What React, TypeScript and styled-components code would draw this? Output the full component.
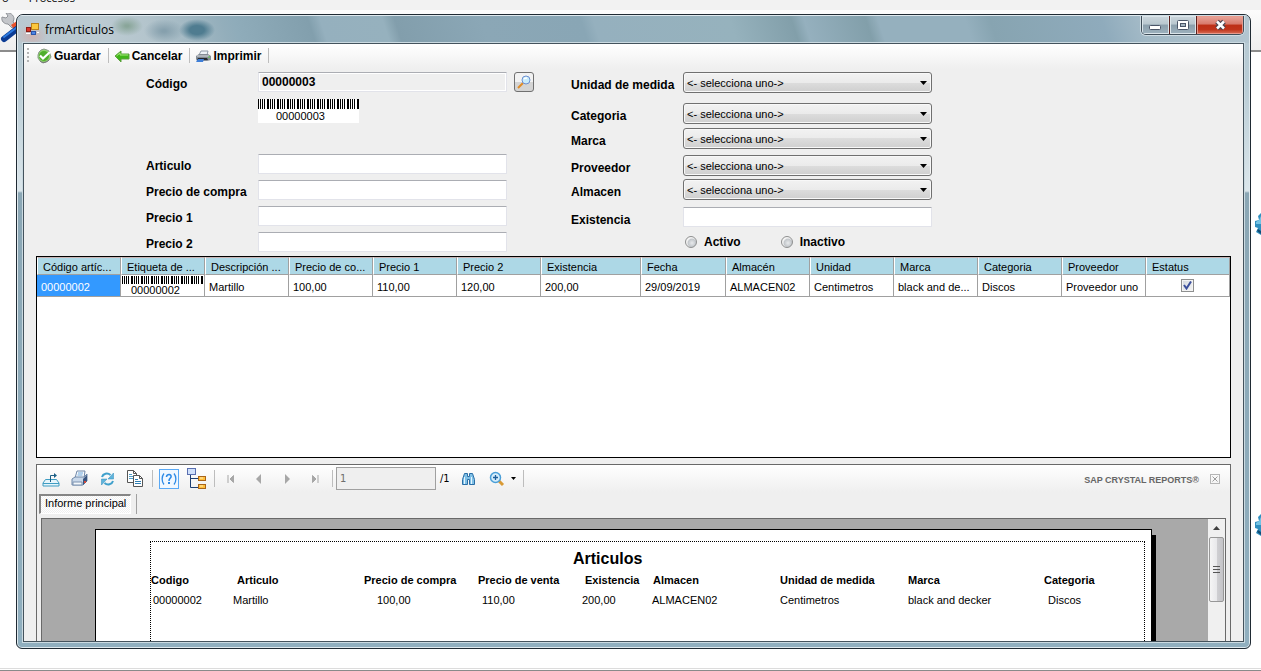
import React from "react";
import styled, { createGlobalStyle } from "styled-components";

const Global = createGlobalStyle`
  *, *::before, *::after { box-sizing: border-box; }
  body { margin: 0; background: #fff; }
  button, input, select { font: inherit; color: inherit; margin: 0; padding: 0; border: 0; background: none; }
`;

const UI = `"Liberation Sans", Arial, sans-serif`;
const TAHOMA = `"DejaVu Sans Condensed", "DejaVu Sans", sans-serif`;
const SEGOE = `"Open Sans", "Noto Sans", sans-serif`;

/* ---------- desktop behind the window ---------- */

const Desktop = styled.div`
  position: relative;
  height: 100vh;
  min-height: 480px;
  display: flex;
  flex-direction: column;
  overflow: hidden;
  background: #fff;
  font-family: ${UI};
  font-size: 11px;
  color: #000;
`;

const ParentForm = styled.div`
  position: absolute;
  inset: 0;
  display: flex;
  flex-direction: column;
`;

const ParentMenu = styled.div`
  height: 10px;
  flex: none;
  display: flex;
  gap: 20px;
  align-items: flex-end;
  padding: 0 0 5px 2px;
  overflow: hidden;
  background: #f2f2f2;
  font-family: ${SEGOE};
  font-size: 11px;
  line-height: 14px;
`;

const ParentTools = styled.div`
  flex: none;
  height: 42px;
  padding-top: 3px;
  background: linear-gradient(#fcfcfc, #eeeeee);
  border-bottom: 2px solid #8c8c8c;
`;

const ParentBody = styled.div`
  flex: 1;
  display: flex;
  flex-direction: column;
  align-items: flex-end;
  padding-top: 161px;
  gap: 279px;
`;

const ParentStatus = styled.div`
  flex: none;
  height: 3px;
  border-top: 1px solid #dcdcdc;
  border-bottom: 1px solid #8a8a8a;
`;

/* ---------- window frame ---------- */

const WindowFrame = styled.section`
  position: relative;
  flex: 1;
  min-height: 0;
  display: flex;
  flex-direction: column;
  margin: 14px 10px 22px 16px;
  padding: 0 6px 6px;
  border: 1px solid #1f2a33;
  border-radius: 7px 7px 6px 6px;
  overflow: hidden;
  background: linear-gradient(#b5c8d1 0, #b9ccd5 70px, #dbe6eb 176px, #8ba7b5 178px, #90afbf 100%);
  box-shadow: inset 0 0 0 1px #dfe9ee;
`;

const TitleBar = styled.header`
  flex: none;
  height: 28px;
  display: flex;
  align-items: flex-start;
  justify-content: space-between;
  margin: 0 -5px;
  padding: 0 5px 0 3px;
  border-top: 1px solid #dfe9ee;
  background:
    radial-gradient(ellipse 18px 11px at 179px 14px, #4f7c90 40%, transparent 100%),
    radial-gradient(ellipse 16px 10px at 109px 10px, #8aa69a 10%, transparent 100%),
    radial-gradient(ellipse 20px 12px at 146px 15px, #86a0ad 10%, transparent 100%),
    radial-gradient(ellipse 16px 12px at 14px 20px, #cdb3b3 0, transparent 100%),
    linear-gradient(72deg, #b9c8d0 0, #bccbd2 7%, #b3c4cc 11%, #93aebb 17%, #8facba 18%, #829fad 24%, #95b0be 25%,
      #96b1be 30%, #829eac 31%, #8ba7b6 38%, #89a6b5 46%, #95b0be 47%, #96b2bd 58%, #829faa 63%, #95b0be 64%,
      #829faa 69%, #95b0be 70%, #95b0be 77%, #87a4b1 79%, #8fabbc 88%, #a2b9c6 91%, #b3c6d0 100%);
`;

const Caption = styled.h1`
  display: flex;
  align-items: center;
  gap: 6px;
  height: 26px;
  margin: 0;
  padding-left: 5px;
  font-family: ${SEGOE};
  font-size: 12px;
  font-weight: 400;
`;

const CaptionButtons = styled.div`
  display: flex;
  border: 1px solid #3f4d58;
  border-top: 0;
  border-radius: 0 0 5px 5px;
  overflow: hidden;
  box-shadow: 0 0 0 1px #cfdce3;
`;

const CaptionButton = styled.button<{ $close?: boolean }>`
  width: ${(p) => (p.$close ? 47 : 27)}px;
  height: 18px;
  display: flex;
  align-items: center;
  justify-content: center;
  border-left: ${(p) => (p.$close ? "1px solid #5c1f1c" : "0")};
  box-shadow: inset 0 0 0 1px ${(p) => (p.$close ? "#e79a8c" : "#dbe5ea")};
  background: ${(p) =>
    p.$close
      ? "linear-gradient(#e9a79c 0, #d8796a 45%, #bd2f16 50%, #c0341a 75%, #d9705a 100%)"
      : "linear-gradient(#ccd7dd 0, #b9c7cf 45%, #8b9fac 50%, #9db1bd 100%)"};
  & + & { border-left: 1px solid ${(p) => (p.$close ? "#5c1f1c" : "#5d6c78")}; }
`;

const Client = styled.main`
  flex: 1;
  min-height: 0;
  display: flex;
  flex-direction: column;
  border: 1px solid #44535d;
  outline: 1px solid #cbdae1;
  background: #efefef;
  overflow: hidden;
`;

/* ---------- command bar ---------- */

const CommandBar = styled.div`
  flex: none;
  height: 25px;
  display: flex;
  align-items: center;
  padding: 0 0 2px 3px;
  background: linear-gradient(#ffffff, #efefef);
`;

const Grip = styled.span`
  width: 2px;
  height: 15px;
  margin-right: 7px;
  background: repeating-linear-gradient(#b4b4b4 0 2px, transparent 2px 4px);
`;

const CommandButton = styled.button`
  display: flex;
  align-items: center;
  gap: 2px;
  font-size: 12px;
  font-weight: 700;
  line-height: 16px;
`;

const BarSeparator = styled.span`
  width: 1px;
  height: 15px;
  margin: 0 5px 0 7px;
  background: #bdbdbd;
`;

/* ---------- form ---------- */

const Form = styled.form`
  flex: none;
  display: flex;
  align-items: flex-start;
  height: 187px;
  padding: 3px 0 0 122px;
`;

const LeftFields = styled.div`
  display: grid;
  grid-template-columns: 112px 249px 27px;
  grid-template-rows: 27px 55px 26px 26px 26px 21px;
  align-items: start;
  margin-right: 37px;
  line-height: 24px;
`;

const RightFields = styled.div`
  display: grid;
  grid-template-columns: 112px 249px;
  grid-template-rows: 31px 25px 27px 24px 28px 27px;
  align-items: start;
  line-height: 26px;
`;

const FieldLabel = styled.label`
  grid-column: 1;
  font-size: 12px;
  font-weight: 700;
  white-space: nowrap;
`;

const TextInput = styled.input<{ $bold?: boolean }>`
  width: 100%;
  height: 20px;
  padding: 0 3px;
  border: 1px solid #e2e3ea;
  border-top-color: #abadb3;
  border-radius: 1px;
  background: ${(p) => (p.readOnly ? "#efefef" : "#fff")};
  box-shadow: ${(p) => (p.readOnly ? "inset 0 0 0 1px #fff" : "none")};
  font-size: ${(p) => (p.$bold ? 12 : 11)}px;
  font-weight: ${(p) => (p.$bold ? 700 : 400)};
`;

const BarcodeBox = styled.div`
  grid-column: 2;
  width: 101px;
  display: flex;
  flex-direction: column;
  background: #fff;
  line-height: 14px;
`;

const BarcodeText = styled.span<{ $indent: number }>`
  padding-left: ${(p) => p.$indent}px;
`;

const LookupButton = styled.button`
  justify-self: end;
  width: 20px;
  height: 20px;
  display: flex;
  align-items: center;
  justify-content: center;
  border: 1px solid #707070;
  border-radius: 3px;
  background: linear-gradient(#f2f2f2 50%, #d4d4d4 50%);
`;

const SelectBox = styled.span`
  position: relative;
  display: block;
  svg {
    position: absolute;
    right: 5px;
    top: 9px;
    pointer-events: none;
  }
`;

const Select = styled.select`
  appearance: none;
  display: block;
  width: 100%;
  height: 21px;
  padding: 0 3px;
  border: 1px solid #707070;
  border-radius: 3px;
  box-shadow: inset 0 0 0 1px #f8f8f8;
  background: linear-gradient(#f2f2f2 0, #ebebeb 50%, #dddddd 50%, #cfcfcf 100%);
  font-size: 11px;
  line-height: normal;
`;

const RadioRow = styled.div`
  grid-column: 2;
  display: flex;
  gap: 40px;
  padding: 1px 0 0 2px;
`;

const RadioLabel = styled.label`
  display: flex;
  align-items: center;
  gap: 7px;
  font-size: 12px;
  font-weight: 700;
  line-height: 14px;
`;

const Radio = styled.input`
  appearance: none;
  width: 12px;
  height: 12px;
  border: 1px solid #8e8f8f;
  border-radius: 50%;
  background: radial-gradient(circle at 60% 60%, #e8eaec 0, #c3c7cb 45%, #f4f4f4 60%);
`;

/* ---------- data grid ---------- */

const DataGrid = styled.div`
  flex: none;
  height: 202px;
  margin: 0 12px 6px;
  border: 1px solid #000;
  background: #fff;
  overflow: hidden;
`;

const GridTable = styled.table`
  width: 100%;
  table-layout: fixed;
  border-collapse: separate;
  border-spacing: 0;
  line-height: 13px;
  white-space: nowrap;
`;

const GridHead = styled.th`
  height: 18px;
  padding: 2px 0 0 5px;
  overflow: hidden;
  text-align: left;
  font-weight: 400;
  border-top: 1px solid #c9b5b5;
  border-left: 1px solid #fff;
  border-right: 1px solid #a0a0a0;
  border-bottom: 1px solid #a0a0a0;
  background: #add8e6;
`;

const GridCell = styled.td<{ $selected?: boolean; $flush?: boolean; $center?: boolean }>`
  height: 22px;
  padding: ${(p) => (p.$flush ? "0 1px" : p.$center ? "0" : "3px 0 0 4px")};
  overflow: hidden;
  vertical-align: ${(p) => (p.$flush ? "top" : "middle")};
  text-align: ${(p) => (p.$center ? "center" : "left")};
  border-right: 1px solid #a0a0a0;
  border-bottom: 1px solid #a0a0a0;
  background: ${(p) => (p.$selected ? "#3399ff" : "#fff")};
  color: ${(p) => (p.$selected ? "#fff" : "#000")};
`;

const CellBarcode = styled.div`
  display: flex;
  flex-direction: column;
  height: 21px;
  padding-top: 1px;
  line-height: 12px;
  svg { flex: none; }
`;

const CheckWrap = styled.label`
  position: relative;
  display: inline-block;
  width: 13px;
  height: 13px;
  vertical-align: top;
  svg { position: absolute; left: 2px; top: 2px; }
`;

const CheckBox = styled.input`
  appearance: none;
  display: block;
  width: 13px;
  height: 13px;
  border: 1px solid #8e8f8f;
  background: linear-gradient(135deg, #d3d8de, #f5f5f5);
  box-shadow: inset 0 0 0 1px #f4f4f4;
`;

/* ---------- report viewer ---------- */

const Viewer = styled.section`
  flex: 1;
  min-height: 0;
  display: flex;
  flex-direction: column;
  margin: 0 12px;
  border: 1px solid #696969;
  border-bottom: 0;
`;

const ViewerBar = styled.div`
  flex: none;
  height: 27px;
  display: flex;
  align-items: center;
  background: linear-gradient(#ffffff, #efefef);
`;

const ToolButton = styled.button`
  width: 28px;
  height: 24px;
  display: flex;
  align-items: center;
  justify-content: center;
`;

const CaretButton = styled(ToolButton)`
  width: 5px;
`;

const ToolSeparator = styled.span<{ $wide?: boolean }>`
  width: 1px;
  height: 17px;
  margin: 0 2px 0 ${(p) => (p.$wide ? 7 : 3)}px;
  background: #bdbdbd;
`;

const PageInput = styled.input`
  width: 100px;
  height: 23px;
  margin-left: 1px;
  padding: 0 3px;
  border: 1px solid #a0a0a0;
  background: #efefef;
  color: #6d6d6d;
  font-family: ${TAHOMA};
  font-size: 11px;
`;

const PageTotal = styled.span`
  margin: 0 5px 0 4px;
  font-family: ${TAHOMA};
  font-size: 11px;
`;

const Brand = styled.span`
  margin: 3px 11px 0 auto;
  color: #666;
  font-size: 9px;
  font-weight: 700;
`;

const ClosePanel = styled.button`
  width: 10px;
  height: 10px;
  margin-right: 10px;
  display: flex;
  border: 1px solid #b5b5b5;
`;

const TabRow = styled.div`
  flex: none;
  height: 26px;
  display: flex;
  align-items: flex-start;
  padding: 2px 0 0 2px;
`;

const Tab = styled.button`
  height: 20px;
  padding: 0 4px 2px;
  border: 1px solid #fff;
  border-top: 2px solid #858585;
  border-left: 2px solid #858585;
  background: repeating-conic-gradient(#f0f0f0 0 25%, #ffffff 0 50%) 0 0 / 2px 2px;
  font-size: 11px;
  line-height: 15px;
  white-space: nowrap;
`;

const TabSeparator = styled.span`
  width: 1px;
  height: 20px;
  margin-left: 5px;
  background: #a0a0a0;
`;

const ReportPane = styled.div`
  flex: 1;
  min-height: 0;
  display: flex;
  margin: 0 4px;
  border: 1px solid #696969;
  border-bottom: 0;
  background: #a9a9a9;
  overflow: hidden;
`;

const Page = styled.article`
  flex: 1;
  min-width: 0;
  margin: 10px 56px 0 53px;
  padding: 11px 6px 0 54px;
  border: 1px solid #000;
  border-bottom: 0;
  background: #fff;
  box-shadow: 4px 6px 0 0 #000;
`;

const PageMargins = styled.div`
  height: 100%;
  border: 1px dotted #000;
  border-bottom: 0;
`;

const ReportTitle = styled.h2`
  margin: 7px 0 3px;
  padding-left: 422px;
  font-size: 16px;
  line-height: 20px;
`;

const ReportTable = styled.table`
  width: 100%;
  table-layout: fixed;
  border-collapse: collapse;
  line-height: 14px;
  white-space: nowrap;
`;

const ReportHead = styled.th<{ $indent: number }>`
  height: 16px;
  padding: 0 0 0 ${(p) => p.$indent}px;
  text-align: left;
  font-weight: 700;
`;

const ReportCell = styled.td<{ $indent: number }>`
  height: 24px;
  padding: 0 0 0 ${(p) => p.$indent}px;
`;

const ScrollTrack = styled.div`
  flex: none;
  width: 17px;
  display: flex;
  flex-direction: column;
  align-items: center;
  padding: 0 1px;
  background: #f0f0f0;
`;

const ScrollArrow = styled.button`
  width: 15px;
  height: 18px;
  display: flex;
  align-items: center;
  justify-content: center;
`;

const ScrollThumb = styled.div`
  width: 15px;
  height: 65px;
  display: flex;
  align-items: center;
  justify-content: center;
  border: 1px solid #979797;
  border-radius: 2px;
  background: linear-gradient(to right, #f5f5f5 0, #e9e9eb 50%, #cfcfd2 55%, #c4c4c8 100%);
`;

/* ---------- icons ---------- */

const Svg = ({ w, h, children }: { w: number; h: number; children: React.ReactNode }) => (
  <svg width={w} height={h} viewBox={`0 0 ${w} ${h}`} fill="none" aria-hidden="true">
    {children}
  </svg>
);

const Wrench = () => (
  <Svg w={17} h={32}>
    <path d="M2 4l4 1 2-2-2-3c4-1 8 2 8 6l-1 3 3 3-4 3-4-4C4 11 1 8 2 4z" fill="#c4c6ca" stroke="#8f9297" />
    <path d="M11 12l6-4v9l-3-1z" fill="#e8502a" />
    <path d="M17 16L4 26" stroke="#0c3c94" strokeWidth="6" strokeLinecap="round" />
    <path d="M16 15L4 24" stroke="#2c7be0" strokeWidth="2" strokeLinecap="round" />
  </Svg>
);

const GearEdge = () => (
  <Svg w={7} h={22}>
    <path d="M7 0L4 3l1 4-4 1v6l3 1-2 4 5 3z" fill="#2f8fc0" />
    <path d="M7 3L5 7 2 9v2h5z" fill="#74c3e4" />
    <path d="M3 18l4 3v-3l-3-2z" fill="#0e4e78" />
  </Svg>
);

const FormIcon = () => (
  <Svg w={13} h={13}>
    <rect x="0.500" y="4.500" width="4" height="4" fill="#d8352a" stroke="#8d1c14" />
    <rect x="5.500" y="0.500" width="7" height="6" fill="#fbc83d" stroke="#b9821a" />
    <rect x="5.500" y="8.500" width="4" height="3" fill="#4f86e8" stroke="#2b55a8" />
    <path d="M0 10.500h4M11 9.500h2" stroke="#fff" />
  </Svg>
);

const MinimizeGlyph = () => (
  <Svg w={13} h={12}>
    <rect x="0.500" y="6.500" width="11" height="4" rx="1" fill="#fff" stroke="#4b5568" />
  </Svg>
);

const MaximizeGlyph = () => (
  <Svg w={13} h={12}>
    <rect x="0.500" y="1.500" width="11" height="9" rx="1" fill="#fff" stroke="#4b5568" />
    <rect x="3.500" y="4.500" width="5" height="3" fill="#a5b5c1" stroke="#4b5568" />
  </Svg>
);

const CloseGlyph = () => (
  <Svg w={13} h={12}>
    <path d="M3 2.500l7 7M10 2.500l-7 7" stroke="#4b4550" strokeWidth="5" />
    <path d="M3 2.500l7 7M10 2.500l-7 7" stroke="#fff" strokeWidth="2.500" />
  </Svg>
);

const SaveIcon = () => (
  <Svg w={16} h={16}>
    <path d="M8 1l3 1 2 1 1 3 1 3-2 3-3 2-3 1-3-2-2-3 0-3 1-3 2-2z" fill="#8fd46c" stroke="#8b9a8b" />
    <circle cx="8" cy="8" r="5" fill="#4fae2b" />
    <path d="M4 7.500l3 3L14 4" stroke="#fff" strokeWidth="2.200" />
    <path d="M4 13c2 2 6 2 9-1" stroke="#777" />
  </Svg>
);

const BackArrow = () => (
  <Svg w={16} h={16}>
    <path d="M1 8l6-5v3h8v5H7v3z" fill="#3fb618" stroke="#5c9f3e" />
    <path d="M2.500 8L6 5v2h8" stroke="#a7ea7c" />
  </Svg>
);

const PrinterSmall = () => (
  <Svg w={16} h={16}>
    <path d="M6 3h7l-1 4H4z" fill="#eef3f8" stroke="#8e9aa8" />
    <path d="M1 8l3-2h9l3 2v4l-4 1H2l-1-2z" fill="#858c95" />
    <path d="M2 8h12" stroke="#d9dee2" />
    <path d="M3 10h9l1 2H2z" fill="#26292d" />
    <path d="M3 11h6l-1 3H1z" fill="#3f7fd8" />
    <path d="M13 9h2" stroke="#5fd04c" />
  </Svg>
);

const Lens = () => (
  <Svg w={14} h={14}>
    <path d="M6 8L1 13" stroke="#e08c28" strokeWidth="2" />
    <circle cx="9" cy="5" r="4" fill="#c9ecfb" stroke="#6d8fd0" />
    <path d="M7 4c1-1 2-1 3-1" stroke="#fff" strokeWidth="1.500" />
  </Svg>
);

const DownArrow = () => (
  <Svg w={7} h={4}>
    <path d="M0 0h7L3.500 4z" fill="#000" />
  </Svg>
);

const Tick = () => (
  <Svg w={9} h={9}>
    <path d="M1 4l2.500 3.500L8 0.500" stroke="#3b4f9c" strokeWidth="2" />
  </Svg>
);

const ExportIcon = () => (
  <Svg w={18} h={16}>
    <path d="M3.500 8.500L1 12v3h16v-3l-2.500-3.500z" fill="#e6f5fb" stroke="#3f9cc2" />
    <path d="M1 12.500h16" stroke="#3f9cc2" />
    <path d="M8.500 11V4.500h4" stroke="#1d5f86" />
    <path d="M12 2l3 2.500L12 7z" fill="#1d5f86" />
  </Svg>
);

const PrinterIcon = () => (
  <Svg w={17} h={17}>
    <path d="M6 1h8l-1 7H4z" fill="#f5f9fd" stroke="#6f87a8" />
    <path d="M7 3h5M6.500 5h5" stroke="#6fa8dc" />
    <path d="M1 9l3-2h9l3-3v7l-4 4H1z" fill="#c9d8ea" stroke="#6f88a9" />
    <path d="M12 9l4-4v6l-4 4z" fill="#39557f" />
    <path d="M2 12h9v3H2z" fill="#f4f8fc" stroke="#7d93b0" />
    <path d="M13 12h2" stroke="#d24a3a" strokeWidth="2" />
  </Svg>
);

const RefreshIcon = () => (
  <Svg w={15} h={14}>
    <path d="M2 5c1-3.500 5.500-4.500 8.500-2" stroke="#3fa0cc" strokeWidth="2" />
    <path d="M13.500 1v6H8z" fill="#5fb4dc" stroke="#2f8dbc" strokeWidth="0.500" />
    <path d="M13 9c-1 3.500-5.500 4.500-8.500 2" stroke="#3fa0cc" strokeWidth="2" />
    <path d="M1.500 13V7H7z" fill="#5fb4dc" stroke="#2f8dbc" strokeWidth="0.500" />
  </Svg>
);

const CopyIcon = () => (
  <Svg w={17} h={18}>
    <path d="M0.500 0.500h6l3 3v9h-9z" fill="#fff" stroke="#555" />
    <path d="M6.500 0.500v3h3" stroke="#555" />
    <path d="M2 4.500h3M2 6.500h5M2 8.500h5" stroke="#4f9fcb" />
    <path d="M6.500 5.500h6l3 3v8h-9z" fill="#fff" stroke="#555" />
    <path d="M12.500 5.500v3h3" stroke="#555" />
    <path d="M8 9.500h3M8 11.500h6M8 13.500h6" stroke="#2f7fb4" />
  </Svg>
);

const HelpIcon = () => (
  <Svg w={20} h={20}>
    <rect x="0.500" y="0.500" width="19" height="19" fill="#f1f8ff" stroke="#5aa9f5" />
    <path d="M5 4.500c-2.500 3-2.500 8 0 11M15 4.500c2.500 3 2.500 8 0 11" stroke="#2d8ae6" strokeWidth="1.300" />
    <path d="M7.500 8c0-3.500 5.500-3 4.500 0-0.500 1.500-2 1.500-2 4" stroke="#2d8ae6" strokeWidth="1.600" />
    <rect x="9" y="13" width="2" height="2" fill="#2d8ae6" />
  </Svg>
);

const TreeIcon = () => (
  <Svg w={20} h={22}>
    <path d="M3.500 7v12.500H12M3.500 10.500H12" stroke="#1c3e72" />
    <rect x="0.500" y="0.500" width="8" height="6" fill="#cfe0fb" stroke="#5a6fb0" />
    <rect x="11.500" y="8.500" width="7" height="4" fill="#ffbf3c" stroke="#a8641a" />
    <rect x="11.500" y="16.500" width="7" height="4" fill="#ffbf3c" stroke="#a8641a" />
    <path d="M13 10h3M13 18h3" stroke="#fff0b8" />
  </Svg>
);

const NavIcon = ({ kind }: { kind: "first" | "prev" | "next" | "last" }) => (
  <Svg w={8} h={10}>
    {kind === "first" && <path d="M1 1v8M6.500 1.500v7L3 5z" stroke="#a7a7a7" fill="#a7a7a7" />}
    {kind === "prev" && <path d="M6 0v10L1 5z" fill="#a7a7a7" />}
    {kind === "next" && <path d="M2 0v10l5-5z" fill="#a7a7a7" />}
    {kind === "last" && <path d="M7 1v8M1.500 1.500v7L5 5z" stroke="#a7a7a7" fill="#a7a7a7" />}
  </Svg>
);

const Binoculars = () => (
  <Svg w={15} h={14}>
    <path d="M3.500 1.500h3v3h2v-3h3l2 6v5h-5v-5h-2v5h-5v-5z" fill="#7fc0e6" stroke="#2a6ea6" />
    <path d="M3.500 5v7M10.500 5v7" stroke="#e6f5ff" />
  </Svg>
);

const ZoomIcon = () => (
  <Svg w={16} h={16}>
    <path d="M10 10l4 4" stroke="#d99a35" strokeWidth="3" />
    <circle cx="6.500" cy="6.500" r="5" fill="#d5edfb" stroke="#4a9fd8" strokeWidth="1.500" />
    <path d="M4 6.500h5M6.500 4v5" stroke="#1d5f9c" strokeWidth="1.300" />
  </Svg>
);

const MenuCaret = () => (
  <Svg w={5} h={3}>
    <path d="M0 0h5L2.500 3z" fill="#000" />
  </Svg>
);

const SmallCross = () => (
  <Svg w={8} h={8}>
    <path d="M1.500 1.500l5 5M6.500 1.500l-5 5" stroke="#9b9b9b" />
  </Svg>
);

const ArrowUp = () => (
  <Svg w={7} h={4}>
    <path d="M0 4h7L3.500 0z" fill="#404040" />
  </Svg>
);

const ThumbGrip = () => (
  <Svg w={7} h={8}>
    <path d="M0 0.500h7M0 3.500h7M0 6.500h7" stroke="#555" />
  </Svg>
);

const BARS = [[0, 2], [3, 1], [5, 1], [7, 1]];

const Barcode = ({ height }: { height: number }) => (
  <svg width="100%" height={height} shapeRendering="crispEdges" aria-hidden="true">
    {Array.from({ length: 11 }, (_, i) =>
      BARS.map(([x, w]) => <rect key={`${i}-${x}`} x={i * 10 + x - 1} y="0" width={w} height={height} fill="#000" />),
    )}
  </svg>
);

/* ---------- data ---------- */

const columns = [
  { title: "Código artíc...", width: 84 },
  { title: "Etiqueta de ...", width: 84 },
  { title: "Descripción ...", width: 84, value: "Martillo" },
  { title: "Precio de co...", width: 84, value: "100,00" },
  { title: "Precio 1", width: 84, value: "110,00" },
  { title: "Precio 2", width: 84, value: "120,00" },
  { title: "Existencia", width: 100, value: "200,00" },
  { title: "Fecha", width: 85, value: "29/09/2019" },
  { title: "Almacén", width: 84, value: "ALMACEN02" },
  { title: "Unidad", width: 84, value: "Centimetros" },
  { title: "Marca", width: 84, value: "black and de..." },
  { title: "Categoria", width: 84, value: "Discos" },
  { title: "Proveedor", width: 84, value: "Proveedor uno" },
  { title: "Estatus", width: 84 },
];

const reportColumns = [
  { title: "Codigo", value: "00000002", width: 82, head: 0, cell: 2 },
  { title: "Articulo", value: "Martillo", width: 131, head: 4, cell: 0 },
  { title: "Precio de compra", value: "100,00", width: 114, head: 0, cell: 13 },
  { title: "Precio de venta", value: "110,00", width: 104, head: 0, cell: 4 },
  { title: "Existencia", value: "200,00", width: 70, head: 3, cell: 0 },
  { title: "Almacen", value: "ALMACEN02", width: 128, head: 1, cell: 0 },
  { title: "Unidad de medida", value: "Centimetros", width: 128, head: 0, cell: 0 },
  { title: "Marca", value: "black and decker", width: 136, head: 0, cell: 0 },
  { title: "Categoria", value: "Discos", width: 101, head: 0, cell: 4 },
];

const textFields = [
  { id: "articulo", label: "Articulo" },
  { id: "compra", label: "Precio de compra" },
  { id: "precio1", label: "Precio 1" },
  { id: "precio2", label: "Precio 2" },
];

const pickers = [
  { id: "unidad", label: "Unidad de medida" },
  { id: "categoria", label: "Categoria" },
  { id: "marca", label: "Marca" },
  { id: "proveedor", label: "Proveedor" },
  { id: "almacen", label: "Almacen" },
];

export default function App() {
  return (
    <Desktop>
      <Global />
      <ParentForm>
        <ParentMenu>
          <span>o</span>
          <span>Procesos</span>
        </ParentMenu>
        <ParentTools>
          <Wrench />
        </ParentTools>
        <ParentBody>
          <GearEdge />
          <GearEdge />
        </ParentBody>
        <ParentStatus />
      </ParentForm>

      <WindowFrame>
        <TitleBar>
          <Caption>
            <FormIcon />
            frmArticulos
          </Caption>
          <CaptionButtons>
            <CaptionButton aria-label="Minimizar"><MinimizeGlyph /></CaptionButton>
            <CaptionButton aria-label="Maximizar"><MaximizeGlyph /></CaptionButton>
            <CaptionButton $close aria-label="Cerrar"><CloseGlyph /></CaptionButton>
          </CaptionButtons>
        </TitleBar>

        <Client>
          <CommandBar>
            <Grip />
            <CommandButton><SaveIcon />Guardar</CommandButton>
            <BarSeparator />
            <CommandButton><BackArrow />Cancelar</CommandButton>
            <BarSeparator />
            <CommandButton><PrinterSmall />Imprimir</CommandButton>
            <BarSeparator />
          </CommandBar>

          <Form onSubmit={(e) => e.preventDefault()}>
            <LeftFields>
              <FieldLabel htmlFor="codigo">Código</FieldLabel>
              <TextInput id="codigo" $bold readOnly value="00000003" />
              <LookupButton type="button" aria-label="Buscar"><Lens /></LookupButton>
              <BarcodeBox>
                <Barcode height={10} />
                <BarcodeText $indent={18}>00000003</BarcodeText>
              </BarcodeBox>
              <span />
              {textFields.map((f) => (
                <React.Fragment key={f.id}>
                  <FieldLabel htmlFor={f.id}>{f.label}</FieldLabel>
                  <TextInput id={f.id} />
                </React.Fragment>
              ))}
            </LeftFields>

            <RightFields>
              {pickers.map((f) => (
                <React.Fragment key={f.id}>
                  <FieldLabel htmlFor={f.id}>{f.label}</FieldLabel>
                  <SelectBox>
                    <Select id={f.id}>
                      <option>{"<- selecciona uno->"}</option>
                    </Select>
                    <DownArrow />
                  </SelectBox>
                </React.Fragment>
              ))}
              <FieldLabel htmlFor="existencia">Existencia</FieldLabel>
              <TextInput id="existencia" />
              <RadioRow>
                <RadioLabel><Radio type="radio" name="estatus" />Activo</RadioLabel>
                <RadioLabel><Radio type="radio" name="estatus" />Inactivo</RadioLabel>
              </RadioRow>
            </RightFields>
          </Form>

          <DataGrid>
            <GridTable>
              <colgroup>
                {columns.map((c) => <col key={c.title} width={c.width} />)}
              </colgroup>
              <thead>
                <tr>
                  {columns.map((c) => <GridHead key={c.title}>{c.title}</GridHead>)}
                </tr>
              </thead>
              <tbody>
                <tr>
                  <GridCell $selected>00000002</GridCell>
                  <GridCell $flush>
                    <CellBarcode>
                      <Barcode height={8} />
                      <BarcodeText $indent={9}>00000002</BarcodeText>
                    </CellBarcode>
                  </GridCell>
                  {columns.slice(2, 13).map((c) => <GridCell key={c.title}>{c.value}</GridCell>)}
                  <GridCell $center>
                    <CheckWrap>
                      <CheckBox type="checkbox" defaultChecked aria-label="Estatus" />
                      <Tick />
                    </CheckWrap>
                  </GridCell>
                </tr>
              </tbody>
            </GridTable>
          </DataGrid>

          <Viewer>
            <ViewerBar>
              <ToolButton aria-label="Exportar"><ExportIcon /></ToolButton>
              <ToolButton aria-label="Imprimir informe"><PrinterIcon /></ToolButton>
              <ToolButton aria-label="Actualizar"><RefreshIcon /></ToolButton>
              <ToolButton aria-label="Copiar"><CopyIcon /></ToolButton>
              <ToolSeparator />
              <ToolButton aria-label="Panel de parámetros"><HelpIcon /></ToolButton>
              <ToolButton aria-label="Árbol de grupos"><TreeIcon /></ToolButton>
              <ToolSeparator />
              <ToolButton aria-label="Primera página"><NavIcon kind="first" /></ToolButton>
              <ToolButton aria-label="Página anterior"><NavIcon kind="prev" /></ToolButton>
              <ToolButton aria-label="Página siguiente"><NavIcon kind="next" /></ToolButton>
              <ToolButton aria-label="Última página"><NavIcon kind="last" /></ToolButton>
              <ToolSeparator />
              <PageInput aria-label="Página" defaultValue="1" />
              <PageTotal>/1</PageTotal>
              <ToolButton aria-label="Buscar texto"><Binoculars /></ToolButton>
              <ToolButton aria-label="Zoom"><ZoomIcon /></ToolButton>
              <CaretButton aria-label="Opciones de zoom"><MenuCaret /></CaretButton>
              <ToolSeparator $wide />
              <Brand>SAP CRYSTAL REPORTS®</Brand>
              <ClosePanel aria-label="Cerrar informe"><SmallCross /></ClosePanel>
            </ViewerBar>

            <TabRow>
              <Tab>Informe principal</Tab>
              <TabSeparator />
            </TabRow>

            <ReportPane>
              <Page>
                <PageMargins>
                  <ReportTitle>Articulos</ReportTitle>
                  <ReportTable>
                    <colgroup>
                      {reportColumns.map((c) => <col key={c.title} width={c.width} />)}
                    </colgroup>
                    <thead>
                      <tr>
                        {reportColumns.map((c) => <ReportHead key={c.title} $indent={c.head}>{c.title}</ReportHead>)}
                      </tr>
                    </thead>
                    <tbody>
                      <tr>
                        {reportColumns.map((c) => <ReportCell key={c.title} $indent={c.cell}>{c.value}</ReportCell>)}
                      </tr>
                    </tbody>
                  </ReportTable>
                </PageMargins>
              </Page>
              <ScrollTrack>
                <ScrollArrow aria-label="Subir"><ArrowUp /></ScrollArrow>
                <ScrollThumb><ThumbGrip /></ScrollThumb>
              </ScrollTrack>
            </ReportPane>
          </Viewer>
        </Client>
      </WindowFrame>
    </Desktop>
  );
}
